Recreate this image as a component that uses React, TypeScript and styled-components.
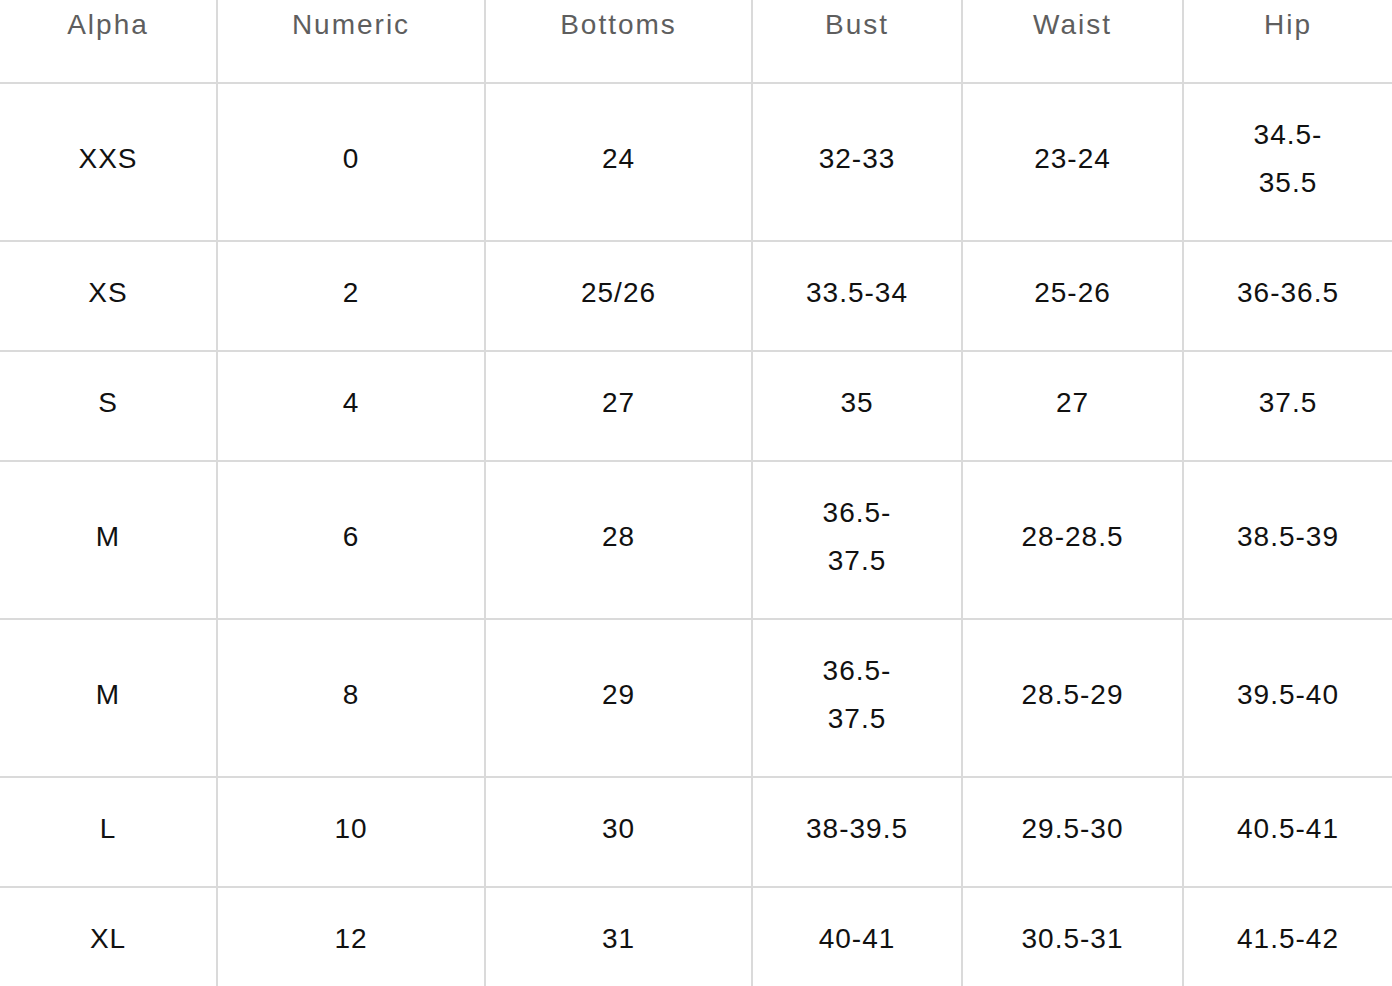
import React from "react";
import styled, { createGlobalStyle } from "styled-components";

const Global = createGlobalStyle`
  html, body { margin: 0; padding: 0; background: #fff; }
  body { font-family: "Liberation Sans", Arial, sans-serif; }
`;

const Table = styled.table`
  width: 1392px;
  border-collapse: collapse;
  table-layout: fixed;
  font-family: "Liberation Sans", Arial, sans-serif;
  font-size: 28px;
  line-height: 48px;
`;

const HeadCell = styled.th`
  font-weight: 400;
  color: #5e5e5e;
  letter-spacing: 2px;
  text-align: center;
  padding: 1px 0 33px;
  border-bottom: 2px solid #dadada;
  border-left: 2px solid #dadada;
  &:first-child { border-left: none; }
`;

const Cell = styled.td`
  color: #111;
  text-align: center;
  vertical-align: middle;
  letter-spacing: 1px;
  padding: 27px 50px 33px;
  border-bottom: 2px solid #dadada;
  border-left: 2px solid #dadada;
  &:first-child { border-left: none; }
`;

const widths = [217, 268, 267, 210, 221, 209];
const headers = ["Alpha", "Numeric", "Bottoms", "Bust", "Waist", "Hip"];
const rows: string[][] = [
  ["XXS", "0", "24", "32-33", "23-24", "34.5-35.5"],
  ["XS", "2", "25/26", "33.5-34", "25-26", "36-36.5"],
  ["S", "4", "27", "35", "27", "37.5"],
  ["M", "6", "28", "36.5-37.5", "28-28.5", "38.5-39"],
  ["M", "8", "29", "36.5-37.5", "28.5-29", "39.5-40"],
  ["L", "10", "30", "38-39.5", "29.5-30", "40.5-41"],
  ["XL", "12", "31", "40-41", "30.5-31", "41.5-42"],
];

const Value: React.FC<{ text: string }> = ({ text }) => {
  const i = text.indexOf("-");
  if (i < 0) return <>{text}</>;
  return (
    <>
      {text.slice(0, i + 1)}
      <wbr />
      {text.slice(i + 1)}
    </>
  );
};

export default function App() {
  return (
    <>
      <Global />
      <Table>
        <colgroup>
          {widths.map((w, i) => (
            <col key={i} style={{ width: w }} />
          ))}
        </colgroup>
        <thead>
          <tr>
            {headers.map((h) => (
              <HeadCell key={h}>{h}</HeadCell>
            ))}
          </tr>
        </thead>
        <tbody>
          {rows.map((r, ri) => (
            <tr key={ri}>
              {r.map((c, ci) => (
                <Cell key={ci}>
                  <Value text={c} />
                </Cell>
              ))}
            </tr>
          ))}
        </tbody>
      </Table>
    </>
  );
}
